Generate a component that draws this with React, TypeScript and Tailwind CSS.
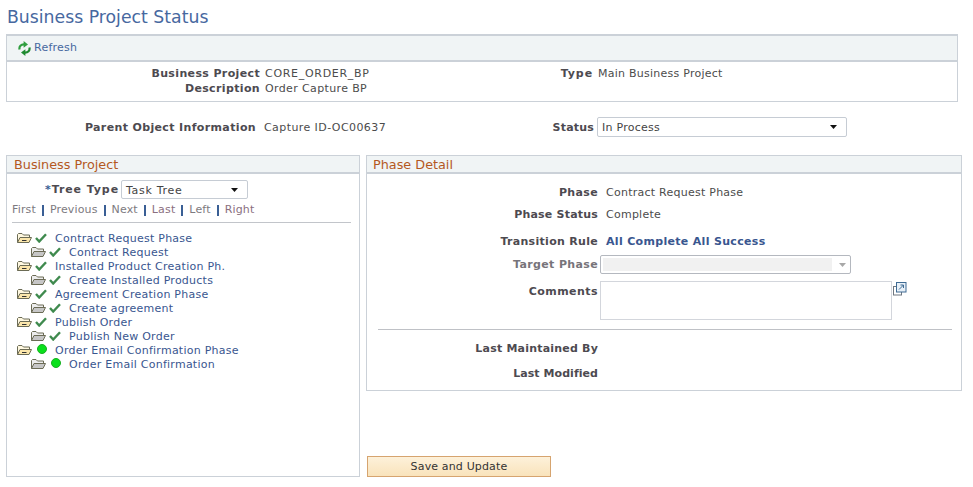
import React from "react";

const FONT = "font-['DejaVu_Sans',Verdana,sans-serif]";

function Refresh() {
  return (
    <svg width="13" height="15" viewBox="0 0 13 15" fill="none" className="shrink-0">
      <path d="M1.6 8.6 C0.8 5.4 3 3.2 6.4 3.4" stroke="#2f9e3f" strokeWidth="2.2" />
      <path d="M5.6 0 L10 3.4 L5.6 6.8 Z" fill="#2f9e3f" />
      <path d="M11.4 6.4 C12.2 9.6 10 11.8 6.6 11.6" stroke="#1f8a30" strokeWidth="2.2" />
      <path d="M7.4 15 L3 11.6 L7.4 8.2 Z" fill="#1f8a30" />
    </svg>
  );
}

function Folder({ yellow }: { yellow?: boolean }) {
  const fill = yellow ? "#fbe6ab" : "#c6c6c6";
  const back = yellow ? "#fff8e0" : "#ededed";
  return (
    <svg width="15" height="10" viewBox="0 0 15 10" className="shrink-0">
      <path d="M0.5 9.5 V1.5 L1.5 0.5 H5 L6.5 2 H12.5 V4.5" fill={back} stroke="#6b6b55" strokeWidth="1" />
      <path d="M0.5 9.5 L3 4.5 H14.5 L12 9.5 Z" fill={fill} stroke="#6b6b55" strokeWidth="1" />
      {yellow && <path d="M5 7.5 H9.5" stroke="#333" strokeWidth="1" />}
    </svg>
  );
}

function Check() {
  return (
    <svg width="12" height="10" viewBox="0 0 12 10" className="shrink-0 -mt-[2px]">
      <path d="M1 5 L4.2 8.5 L11 1.2" fill="none" stroke="#3f8a4e" strokeWidth="2.4" />
    </svg>
  );
}

function Dot() {
  return <span className="block w-[10px] h-[10px] ml-[2px] -mt-[4px] rounded-full bg-[#0ae01c] border border-[#18b022] shrink-0" />;
}

function Arrow({ muted }: { muted?: boolean }) {
  return (
    <svg width="7" height="4" viewBox="0 0 7 4" className="shrink-0">
      <path d="M0 0 H7 L3.5 4 Z" fill={muted ? "#a8a8a8" : "#111"} />
    </svg>
  );
}

function Select({ value, cls, textCls }: { value: string; cls: string; textCls?: string }) {
  return (
    <div className={`flex items-center justify-between border border-[#c6ccd4] rounded-[2px] bg-white pr-[9px] pl-[4px] text-[#444] ${cls}`}>
      <span className={`translate-y-[1px] ${textCls ?? ""}`}>{value}</span>
      <Arrow />
    </div>
  );
}

function Label({ children, w, track }: { children: React.ReactNode; w: string; track?: string }) {
  return <span className={`font-bold text-[#4d4a50] text-right shrink-0 whitespace-nowrap ${track ?? "tracking-[0.36px]"} ${w}`}>{children}</span>;
}

function PanelHeader({ children }: { children: React.ReactNode }) {
  return (
    <div className="h-[18px] leading-[17px] bg-[#f0f4f5] border-b-2 border-[#cbd1d8] text-[12.8px] tracking-normal text-[#b4581f] pl-[6px]">
      {children}
    </div>
  );
}

function TreeRow({ text, child, dot }: { text: string; child?: boolean; dot?: boolean }) {
  return (
    <div className={`h-[14px] flex items-center ${child ? "pl-[14px]" : ""}`}>
      <span className="-mt-[3px] flex"><Folder yellow={!child} /></span>
      <span className="w-[3px]" />
      {dot ? <Dot /> : <Check />}
      <span className="ml-[8px] text-[#39568f] whitespace-nowrap">{text}</span>
    </div>
  );
}

function NavLink({ text, last, visited }: { text: string; last?: boolean; visited?: boolean }) {
  return (
    <>
      <span className={visited ? "text-[#8a6f80]" : "text-[#7d7a80]"}>{text}</span>
      {!last && <span className="w-[2px] h-[11px] bg-[#3a5f95] mx-[6px]" />}
    </>
  );
}

export default function App() {
  return (
    <div className={`w-[973px] h-[487px] bg-white overflow-hidden text-[11px] leading-[14px] tracking-[0.25px] ${FONT}`}>
      <h1 className="pl-[7px] pt-[7px] h-[34px] text-[17.3px] leading-[20px] font-normal tracking-normal text-[#47689f]">Business Project Status</h1>

      <div className="ml-[6px] w-[952px] h-[68px] border border-[#cbd1d8] border-t-2">
        <div className="h-[26px] bg-[#f0f4f5] border-b-2 border-[#cbd1d8] flex items-center pl-[11px] gap-[3px]">
          <Refresh />
          <span className="text-[#47689f]">Refresh</span>
        </div>
        <div className="flex pt-[5px]">
          <div>
            <div className="flex h-[15px]">
              <Label w="w-[253px]">Business Project</Label>
              <span className="ml-[5px] text-[#4c4c4c] tracking-[0.7px] w-[103px] whitespace-nowrap">CORE_ORDER_BP</span>
            </div>
            <div className="flex h-[14px]">
              <Label w="w-[253px]">Description</Label>
              <span className="ml-[5px] text-[#4c4c4c] tracking-[0.37px]">Order Capture BP</span>
            </div>
          </div>
          <div className="flex">
            <Label w="w-[225px]" track="tracking-[0.9px]">Type</Label>
            <span className="ml-[5px] text-[#4c4c4c] whitespace-nowrap">Main Business Project</span>
          </div>
        </div>
      </div>

      <div className="flex items-center h-[20px] mt-[15px]">
        <Label w="w-[256px]"><span className="relative top-[1px]">Parent Object Information</span></Label>
        <span className="ml-[8px] w-[130px] text-[#4c4c4c] tracking-[0.42px] whitespace-nowrap relative top-[1px]">Capture ID-OC00637</span>
        <Label w="w-[200px]" track="tracking-[0.2px]"><span className="relative top-[1px]">Status</span></Label>
        <Select value="In Process" cls="ml-[3px] w-[250px] h-[20px]" />
      </div>

      <div className="flex items-start mt-[18px] ml-[6px]">
        <div className="w-[354px] h-[322px] border border-[#cbd1d8]">
          <PanelHeader><span className="pl-[1px]">Business Project</span></PanelHeader>
          <div className="flex items-center mt-[6px] h-[19px]">
            <Label w="w-[112px]" track="tracking-[0.9px]"><span className="text-[#3a5f95]">*</span>Tree Type</Label>
            <Select value="Task Tree" cls="ml-[2px] w-[127px] h-[19px]" textCls="tracking-[0.7px]" />
          </div>
          <div className="flex items-center ml-[5px] mt-[4px] h-[14px] tracking-[0.15px]">
            <NavLink text="First" />
            <NavLink text="Previous" />
            <NavLink text="Next" />
            <NavLink text="Last" visited />
            <NavLink text="Left" />
            <NavLink text="Right" last visited />
          </div>
          <div className="ml-[5px] w-[339px] h-px bg-[#c2c5ca] mt-[5px]" />
          <div className="pl-[10px] mt-[9px]">
            <TreeRow text="Contract Request Phase" />
            <TreeRow text="Contract Request" child />
            <TreeRow text="Installed Product Creation Ph." />
            <TreeRow text="Create Installed Products" child />
            <TreeRow text="Agreement Creation Phase" />
            <TreeRow text="Create agreement" child />
            <TreeRow text="Publish Order" />
            <TreeRow text="Publish New Order" child />
            <TreeRow text="Order Email Confirmation Phase" dot />
            <TreeRow text="Order Email Confirmation" child dot />
          </div>
        </div>

        <div className="ml-[6px] w-[596px]">
          <div className="h-[236px] border border-[#cbd1d8]">
            <PanelHeader>Phase Detail</PanelHeader>
            <div className="flex h-[22px] items-center mt-[8px]">
              <Label w="w-[231px]">Phase</Label>
              <span className="ml-[8px] text-[#4c4c4c]">Contract Request Phase</span>
            </div>
            <div className="flex h-[22px] items-center">
              <Label w="w-[231px]" track="tracking-[0.2px]">Phase Status</Label>
              <span className="ml-[8px] text-[#4c4c4c]">Complete</span>
            </div>
            <div className="flex h-[18px] items-center mt-[7px]">
              <Label w="w-[231px]" track="tracking-[0.3px]">Transition Rule</Label>
              <span className="ml-[8px] font-bold text-[#39568f] tracking-[0.32px]">All Complete All Success</span>
            </div>
            <div className="flex items-center h-[19px] mt-[4px]">
              <Label w="w-[231px]"><span className="text-[#77747a]">Target Phase</span></Label>
              <div className="ml-[2px] w-[251px] h-[19px] border border-[#b4b8bf] rounded-[2px] flex items-center px-[2px]">
                <div className="w-[229px] h-[13px] bg-[#f1f1f1]" />
                <span className="ml-[7px]"><Arrow muted /></span>
              </div>
            </div>
            <div className="flex items-start mt-[7px]">
              <Label w="w-[231px]" track="tracking-[0.45px]"><span className="relative top-[4px]">Comments</span></Label>
              <div className="ml-[2px] w-[292px] h-[39px] border border-[#d3d6dc] shrink-0" />
              <svg width="14" height="14" viewBox="0 0 14 14" className="ml-[1px] mt-[1px] shrink-0">
                <rect x="0.5" y="4.5" width="8" height="8.5" fill="#fff" stroke="#6f7780" />
                <rect x="3.5" y="0.5" width="9.5" height="9.5" fill="#e7f0f8" stroke="#3e6b94" />
                <path d="M6 7.5 L10.5 3 M7.5 3 H10.5 V6" fill="none" stroke="#3e6b94" />
              </svg>
            </div>
            <div className="ml-[11px] w-[574px] h-px bg-[#bfc1c6] mt-[9px]" />
            <div className="flex h-[14px] items-center mt-[12px]">
              <Label w="w-[231px]" track="tracking-[0.2px]">Last Maintained By</Label>
            </div>
            <div className="flex h-[14px] items-center mt-[11px]">
              <Label w="w-[231px]" track="tracking-[0.05px]">Last Modified</Label>
            </div>
          </div>
          <button className="block mt-[65px] ml-[1px] w-[184px] h-[21px] border border-[#d6a46f] bg-[linear-gradient(#fdf1da,#f9e3bb)] text-[11px] leading-[19px] text-[#333] tracking-[0.15px]">
            Save and Update
          </button>
        </div>
      </div>
    </div>
  );
}
